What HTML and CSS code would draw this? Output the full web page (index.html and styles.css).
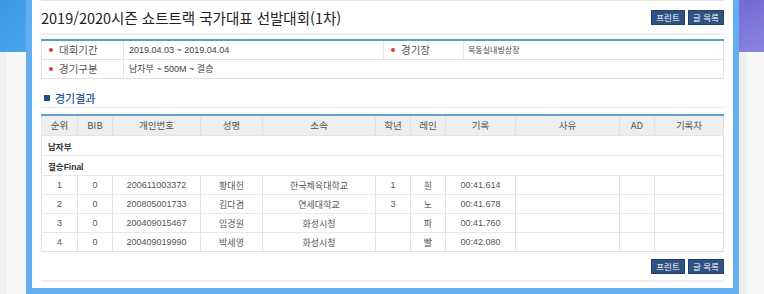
FILE: index.html
```html
<!DOCTYPE html>
<html lang="ko">
<head>
<meta charset="utf-8">
<title>2019/2020시즌 쇼트트랙 국가대표 선발대회(1차)</title>
<link rel="stylesheet" href="styles.css">
</head>
<body>
<div class="page">
  <div class="side side-left"><div class="side-top"></div></div>
  <div class="frame">
    <div class="inner">
      <div class="head">
        <h1 class="title">2019/2020시즌 쇼트트랙 국가대표 선발대회(1차)</h1>
        <div class="btns">
          <span class="btn">프린트</span>
          <span class="btn btn-list">글 목록</span>
        </div>
      </div>

      <table class="info">
        <colgroup><col class="c-l"><col class="c-v"><col class="c-l2"><col></colgroup>
        <tr>
          <th><span class="dot"></span>대회기간</th>
          <td>2019.04.03 ~ 2019.04.04</td>
          <th><span class="dot"></span>경기장</th>
          <td class="small">목동실내빙상장</td>
        </tr>
        <tr>
          <th><span class="dot"></span>경기구분</th>
          <td colspan="3">남자부 ~ 500M ~ 결승</td>
        </tr>
      </table>

      <h2 class="sec"><span class="sq"></span>경기결과</h2>

      <table class="res">
        <colgroup>
          <col style="width:36px"><col style="width:35px"><col style="width:88px"><col style="width:62px">
          <col style="width:113px"><col style="width:35px"><col style="width:35px"><col style="width:70px">
          <col style="width:104px"><col style="width:35px"><col style="width:69px">
        </colgroup>
        <thead>
          <tr><th>순위</th><th>BIB</th><th>개인번호</th><th>성명</th><th>소속</th><th>학년</th><th>레인</th><th>기록</th><th>사유</th><th>AD</th><th>기록차</th></tr>
        </thead>
        <tbody>
          <tr class="grp"><td colspan="11">남자부</td></tr>
          <tr class="grp"><td colspan="11">결승Final</td></tr>
          <tr><td>1</td><td>0</td><td>200611003372</td><td>황대헌</td><td>한국체육대학교</td><td>1</td><td>흰</td><td>00:41.614</td><td></td><td></td><td></td></tr>
          <tr><td>2</td><td>0</td><td>200805001733</td><td>김다겸</td><td>연세대학교</td><td>3</td><td>노</td><td>00:41.678</td><td></td><td></td><td></td></tr>
          <tr><td>3</td><td>0</td><td>200409015467</td><td>임경원</td><td>화성시청</td><td></td><td>파</td><td>00:41.760</td><td></td><td></td><td></td></tr>
          <tr><td>4</td><td>0</td><td>200409019990</td><td>박세영</td><td>화성시청</td><td></td><td>빨</td><td>00:42.080</td><td></td><td></td><td></td></tr>
        </tbody>
      </table>

      <div class="foot">
        <span class="btn">프린트</span>
        <span class="btn btn-list">글 목록</span>
      </div>
    </div>
  </div>
  <div class="side side-right"><div class="side-top"></div></div>
</div>
</body>
</html>
```

FILE: styles.css
```css
* { box-sizing: border-box; }
html, body { margin: 0; padding: 0; }
body {
  width: 764px;
  height: 294px;
  overflow: hidden;
  background: #f4f4f4;
  font-family: "Liberation Sans", "Noto Sans CJK KR", sans-serif;
  color: #333;
}
.page {
  display: flex;
  height: 294px;
}
.side {
  width: 26px;
  flex: none;
  background: linear-gradient(to right, #efefef 0, #efefef 7px, #f7f7f7 7px);
}
.side-top { height: 52px; }
.side-left .side-top { background: linear-gradient(135deg, #3a97e0, #4aa6ec); }
.side-right .side-top { background: linear-gradient(160deg, #7468d4, #8b84e0); }

.frame {
  flex: 1;
  border: 6px solid #63aef0;
  border-top: none;
  background: #fff;
  height: 294px;
}
.inner {
  border-top: 1px solid #e4e4e4;
  margin: 0 9px;
  height: 100%;
}

.head {
  height: 34px;
  display: flex;
  align-items: center;
  justify-content: space-between;
  border-bottom: 2px solid #eeeeee;
}
.title {
  margin: 0;
  font-family: "Noto Sans CJK KR", sans-serif;
  font-size: 14.5px;
  font-weight: 400;
  color: #222;
  letter-spacing: 0;
}
.btns, .foot {
  display: flex;
  gap: 3px;
}
.btn {
  display: flex;
  align-items: center;
  justify-content: center;
  width: 34px;
  height: 15px;
  background: #2f5282;
  border: 1px solid #23406a;
  color: #fff;
  font-family: "Noto Sans CJK KR", sans-serif;
  font-size: 8.5px;
  line-height: 1;
}
.btn-list { width: 36px; }

.info {
  width: 100%;
  margin-top: 4px;
  border-collapse: collapse;
  border-top: 2px solid #5f9dbd;
  border-left: 1px solid #e4e4e4;
  border-right: 1px solid #e4e4e4;
  font-size: 9px;
}
.info .c-l { width: 82px; }
.info .c-v { width: 260px; }
.info .c-l2 { width: 80px; }
.info th, .info td {
  height: 19px;
  padding: 0;
  border-bottom: 1px solid #e2e2e2;
  border-right: 1px solid #e6e6e6;
  text-align: left;
  vertical-align: middle;
}
.info th {
  font-family: "Noto Sans CJK KR", sans-serif;
  font-weight: 400;
  font-size: 10.5px;
  color: #555;
  padding-left: 7px;
}
.info td {
  padding-left: 5px;
  font-size: 9px;
  color: #444;
}
.info td.small { font-size: 8px; padding-left: 4px; }
.dot {
  display: inline-block;
  width: 4px;
  height: 4px;
  border-radius: 50%;
  background: #d9403a;
  margin-right: 6px;
  vertical-align: middle;
  position: relative;
  top: -1px;
}

.sec {
  margin: 0;
  height: 29px;
  padding-top: 12px;
  display: flex;
  align-items: flex-start;
  font-family: "Noto Sans CJK KR", sans-serif;
  font-size: 11px;
  font-weight: 500;
  color: #2a5a95;
  line-height: 14px;
  border-bottom: 1px solid #e6e6e6;
}
.sq {
  width: 6px;
  height: 6px;
  background: #214f8a;
  margin: 4px 5px 0 3px;
}

.res {
  width: 682px;
  table-layout: fixed;
  margin-top: 6px;
  border-collapse: collapse;
  border-top: 2px solid #5e9fd6;
  border-left: 1px solid #e6e6e6;
  border-right: 1px solid #e6e6e6;
  font-size: 9px;
}
.res th {
  height: 21px;
  background: #eeeeee;
  font-family: "Noto Sans CJK KR", sans-serif;
  font-weight: 400;
  font-size: 9.5px;
  color: #555;
  border-right: 1px solid #e0e0e0;
  border-bottom: 1px solid #e4e4e4;
  padding: 0;
}
.res td {
  height: 19px;
  padding: 0;
  text-align: center;
  color: #555;
  border-right: 1px solid #e3e3e3;
  border-bottom: 1px solid #e8e8e8;
  vertical-align: middle;
  font-size: 9px;
}
.res tr.grp td {
  text-align: left;
  padding-left: 6px;
  font-weight: 700;
  font-size: 8.5px;
  color: #333;
  height: 20px;
}
.res tbody tr:last-child td { border-bottom: 1px solid #e0e0e0; }

.foot {
  justify-content: flex-end;
  margin-top: 7px;
  padding-bottom: 6px;
  border-bottom: 2px solid #eeeeee;
}
```
